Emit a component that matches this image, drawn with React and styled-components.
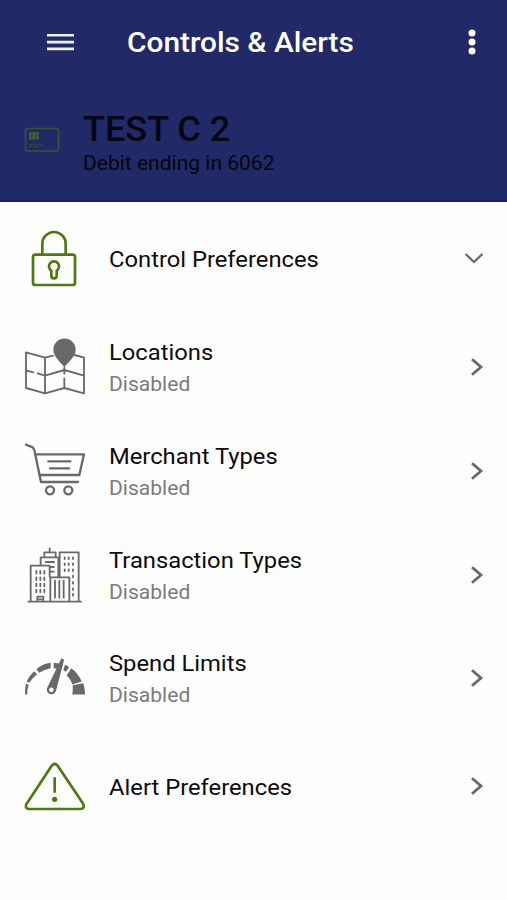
import React from "react";
import styled, { createGlobalStyle } from "styled-components";

const GlobalStyle = createGlobalStyle`
  * { box-sizing: border-box; }
  body { margin: 0; background: #fefefe; font-family: Roboto, "Liberation Sans", sans-serif; }
`;

const Screen = styled.div`
  width: 507px;
  height: 900px;
  overflow: hidden;
  background: #fefefe;
`;

const Header = styled.header`
  height: 202px;
  background: #212a66;
  border-bottom: 2px solid #19205a;
`;

const AppBar = styled.div`
  display: flex;
  align-items: center;
  height: 84px;
  padding: 0 29px 0 47px;
`;

const Title = styled.h1`
  flex: 1;
  margin: 2px 0 0 52px;
  font-size: 28px;
  line-height: 34px;
  font-weight: 500;
  color: #fff;
  white-space: nowrap;
  transform: scaleX(1.065);
  transform-origin: left;
`;

const IconButton = styled.button`
  display: flex;
  padding: 0;
  border: 0;
  background: none;
`;

const CardSummary = styled.div`
  display: flex;
  align-items: center;
  height: 112px;
  padding-left: 24px;
`;

const CardText = styled.div`
  margin: 8px 0 0 23px;
  color: #050610;
  white-space: nowrap;
`;

const CardName = styled.div`
  font-size: 34.5px;
  line-height: 38px;
  font-weight: 500;
  transform: scaleX(1.045);
  transform-origin: left;
`;

const CardNumber = styled.div`
  font-size: 19.5px;
  line-height: 31px;
  transform: scaleX(1.078);
  transform-origin: left;
`;

const Row = styled.div`
  display: flex;
  align-items: center;
  height: ${(p) => p.$height}px;
  padding: 0 23px 0 23px;
`;

const RowIcon = styled.svg`
  flex: none;
  width: 64px;
  height: 64px;
  fill: none;
  stroke: ${(p) => (p.$green ? "#4c7a0c" : "#68696b")};
  color: ${(p) => (p.$green ? "#4c7a0c" : "#68696b")};
  stroke-linecap: round;
  stroke-linejoin: round;
`;

const RowText = styled.div`
  flex: 1;
  margin: 1px 0 0 22px;
  white-space: nowrap;
  transform: scaleX(1.08);
  transform-origin: left;
`;

const Label = styled.div`
  font-size: 22px;
  line-height: 32px;
  color: #0c0c0c;
`;

const Status = styled.div`
  font-size: 19.5px;
  line-height: 31px;
  color: #7b7b7b;
`;

const Chevron = styled.svg`
  width: 20px;
  height: 20px;
  margin: 0 ${(p) => (p.$down ? "0" : "-2px")} 2px 0;
  fill: none;
  stroke: #68686a;
  stroke-width: ${(p) => (p.$down ? 2.2 : 2.8)};
`;

const LockIcon = () => (
  <RowIcon $green viewBox="39 20 192 192" strokeWidth="8">
    <rect x="69" y="103" width="126" height="91" rx="7" />
    <path d="M97 103V70a35 35 0 0 1 70 0v33M124 151a15 15 0 1 1 16 0v15a8 8 0 0 1-16 0z" />
  </RowIcon>
);

const MapIcon = () => (
  <RowIcon viewBox="39 32 192 192" strokeWidth="5.5">
    <path d="M129 91l-24 6-57-16v107l57 16 58-16 59 16V97l-28-8M105 97v107M48 135l22 6m13 3l22 7 58-17 59 17M163 127v18m0 14v29" />
    <path d="M163 126c-9-14-33-31-33-53a33 33 0 0 1 67 0c0 22-25 39-34 53z" fill="currentColor" stroke="none" />
  </RowIcon>
);

const CartIcon = () => (
  <RowIcon viewBox="39 30 192 192" strokeWidth="7">
    <path d="M48 44l20 8 5 8 20 96h111M77 73h145l-14 62H88M115 94h66M120 115h57" />
    <circle cx="120" cy="181" r="12" />
    <circle cx="175" cy="181" r="12" />
  </RowIcon>
);

const BuildingsIcon = () => (
  <RowIcon viewBox="39 24 192 192" strokeWidth="5.5">
    <path d="M55 197h158M62 197V89h57v33M92 88V64h53v58M103 63V49h34v14M119 48V37M149 122V49h57v148M121 197v-73h57v73M135 134v51M148 134v51M161 134v51M107 78h25M121 93h10M121 107h10M82 197v-15h18v15M87 190h8" />
    <path d="M79 105v8M91 105v8M103 105v8M79 124v8M91 124v8M103 124v8M79 143v8M91 143v8M103 143v8M79 161v8M91 161v8M103 161v8M164 64v5M176 64v5M189 64v5M164 82v5M176 82v5M189 82v5M164 100v5M176 100v5M189 100v5M189 119v5M189 138v5M189 157v5M189 174v5" />
  </RowIcon>
);

const GaugeIcon = () => (
  <RowIcon viewBox="39 22.5 192 192" strokeWidth="0">
    <g fill="currentColor">
      <path d="M45 165q-1-17 3-32l8 3q-5 14-4 29zM50 126q8-18 22-31l9 9q-14 11-23 26zM79 89q19-16 43-19v16q-19 3-34 14zM131 70l18 2-7 16-11-2zM165 76q7 3 12 7l-9 14-8-5zM184 86q20 14 31 40l-28 9q-6-18-17-27zM188 137l32-6q5 16 5 34h-38q2-16 1-28z" />
      <path fillRule="evenodd" d="M154 57q7-1 8 5l-24 92a14 14 0 1 1-27-8zM124 144a7 7 0 1 0 .1 0z" />
    </g>
  </RowIcon>
);

const AlertIcon = () => (
  <RowIcon $green viewBox="39 13 192 192" strokeWidth="8">
    <path d="M126 44q8-8 16 0l78 116q4 14-8 15H58q-14-1-9-14zM134 83v40" />
    <circle cx="134" cy="146" r="8" fill="currentColor" stroke="none" />
  </RowIcon>
);

const items = [
  { label: "Control Preferences", Icon: LockIcon, height: 114, down: true },
  { label: "Locations", status: "Disabled", Icon: MapIcon, height: 104 },
  { label: "Merchant Types", status: "Disabled", Icon: CartIcon, height: 104 },
  { label: "Transaction Types", status: "Disabled", Icon: BuildingsIcon, height: 103 },
  { label: "Spend Limits", status: "Disabled", Icon: GaugeIcon, height: 104 },
  { label: "Alert Preferences", Icon: AlertIcon, height: 112 },
];

export default function App() {
  return (
    <Screen>
      <GlobalStyle />
      <Header>
        <AppBar>
          <IconButton aria-label="Menu">
            <svg width="28" height="18" viewBox="0 0 28 18" fill="#f0f0fa">
              <path d="M0 1h27v2.6H0zM0 7.8h27v2.6H0zM0 14.6h27v2.6H0z" />
            </svg>
          </IconButton>
          <Title>Controls &amp; Alerts</Title>
          <IconButton aria-label="More options">
            <svg width="12" height="28" viewBox="0 0 12 28" fill="#fff">
              <circle cx="6" cy="5" r="3.5" />
              <circle cx="6" cy="14" r="3.5" />
              <circle cx="6" cy="23" r="3.5" />
            </svg>
          </IconButton>
        </AppBar>
        <CardSummary>
          <svg width="36" height="26" viewBox="0 0 36 26" fill="none" stroke="#35533c">
            <rect x="1.5" y="1.5" width="33" height="22.5" rx="2" strokeWidth="1.6" />
            <rect x="5" y="5" width="10" height="7.5" rx="1" fill="#3f6231" stroke="none" />
            <path d="M5 8.7h3m4 0h3M8 5v7.500M12 5v7.500" stroke="#294150" strokeWidth=".8" />
            <path d="M5 17.500h6m1 0h6M5 19.500h3m2 0h4" strokeWidth=".8" />
          </svg>
          <CardText>
            <CardName>TEST C 2</CardName>
            <CardNumber>Debit ending in 6062</CardNumber>
          </CardText>
        </CardSummary>
      </Header>
      {items.map(({ label, status, Icon, height, down }) => (
        <Row key={label} $height={height}>
          <Icon />
          <RowText>
            <Label>{label}</Label>
            {status && <Status>{status}</Status>}
          </RowText>
          <Chevron $down={down} viewBox="0 0 20 20">
            <path d={down ? "M1.500 6l8.500 8 8.500-8" : "M6 2.200l9 7.800-9 7.800"} />
          </Chevron>
        </Row>
      ))}
    </Screen>
  );
}
